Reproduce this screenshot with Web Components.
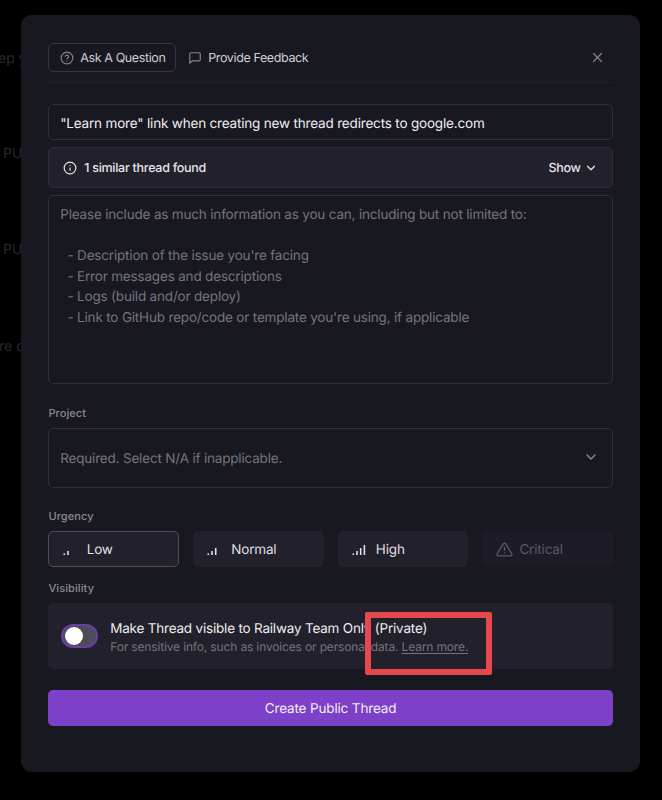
<!DOCTYPE html>
<html><head><meta charset="utf-8">
<style>
html,body{margin:0;padding:0;background:#000;height:800px;overflow:hidden}
body{font-family:Inter,"Liberation Sans",sans-serif;color:#e6e5ea;position:relative;text-rendering:geometricPrecision}
</style></head><body>
<bg-page></bg-page>
<thread-modal>
  <div style="display:flex;align-items:center">
    <tab-btn active icon="q">Ask A Question</tab-btn>
    <tab-btn icon="c">Provide Feedback</tab-btn>
    <x-close></x-close>
  </div>
</thread-modal>
<red-mark></red-mark>
<script>
const icons={
q:'<svg width="14" height="14" viewBox="0 0 24 24" fill="none" stroke="currentColor" stroke-width="2" stroke-linecap="round" stroke-linejoin="round"><circle cx="12" cy="12" r="10"/><path d="M9.1 9a3 3 0 0 1 5.8 1c0 2-3 3-3 3"/><path d="M12 17h.01"/></svg>',
c:'<svg width="14" height="14" viewBox="0 0 24 24" fill="none" stroke="currentColor" stroke-width="2" stroke-linecap="round" stroke-linejoin="round"><path d="M21 15a2 2 0 0 1-2 2H7l-4 4V5a2 2 0 0 1 2-2h14a2 2 0 0 1 2 2z"/></svg>',
info:'<svg width="14" height="14" viewBox="0 0 24 24" fill="none" stroke="currentColor" stroke-width="2" stroke-linecap="round" stroke-linejoin="round"><circle cx="12" cy="12" r="10"/><path d="M12 16v-4"/><path d="M12 8h.01"/></svg>',
down:'<svg width="14" height="14" viewBox="0 0 24 24" fill="none" stroke="currentColor" stroke-width="2.2" stroke-linecap="round" stroke-linejoin="round"><path d="M6 9l6 6 6-6"/></svg>',
warn:'<svg width="17" height="17" viewBox="0 0 24 24" fill="none" stroke="currentColor" stroke-width="2" stroke-linecap="round" stroke-linejoin="round"><path d="M10.3 3.9 1.8 18a2 2 0 0 0 1.7 3h17a2 2 0 0 0 1.7-3L13.7 3.9a2 2 0 0 0-3.4 0z"/><path d="M12 9v4"/><path d="M12 17h.01"/></svg>'
};
function bars(n){
  const hs=[1.6,4,7,10];let s='';
  hs.forEach((h,i)=>{ if(i<n) s+=`<rect x="${(i*3.7+.5).toFixed(1)}" y="${10-h}" width="1.6" height="${h}" fill="currentColor"/>`;});
  return `<svg width="14" height="10" viewBox="0 0 14 10">${s}</svg>`;
}
function def(name,css,html){
  customElements.define(name,class extends HTMLElement{
    constructor(){super();const r=this.attachShadow({mode:'open'});
      r.innerHTML=`<style>${css}</style>`+(typeof html==='function'?html(this):html);}
  });
}
def('bg-page',`:host{display:block;height:800px;color:#2a2a2e;font:14px Inter,"Liberation Sans",sans-serif}
 .l{position:absolute;white-space:nowrap}`,
 `<div class="l" style="left:-2px;top:50px">ep you</div><div class="l" style="left:3px;top:145px">PUBLIC</div><div class="l" style="left:3px;top:241px">PUBLIC</div><div class="l" style="left:-1px;top:338px">re can</div>`);
def('tab-btn',`:host{display:inline-flex;align-items:center;height:29px;box-sizing:border-box;padding:2px 10px 0 10.8px;gap:6px;border:1px solid transparent;border-radius:5px;font-size:12.5px;letter-spacing:-.38px;color:#cfced4;white-space:nowrap}
 :host([active]){border-color:#37363f}
 svg{display:block;color:#85848d;margin-top:-2px}`,
 el=>`${icons[el.getAttribute('icon')]}<slot></slot>`);
def('x-close',`:host{margin-left:auto;margin-right:9.5px;display:block;width:11px;height:11px;color:#85848d}svg{display:block}`,
 `<svg width="11" height="11" viewBox="0 0 11 11" fill="none" stroke="currentColor" stroke-width="1.2" stroke-linecap="round"><path d="M1.5 1.5l8 8M9.5 1.5l-8 8"/></svg>`);
def('field-label',`:host{display:block;font-size:11px;font-weight:500;line-height:14px;color:#8b8a93;letter-spacing:.1px}`,`<slot></slot>`);
def('urg-btn',`:host{display:flex;flex:1;align-items:center;height:36px;box-sizing:border-box;border-radius:5px;background:#21202b;border:1px solid #21202b;padding:2px 0 0 13.3px;gap:10px;font-size:13.5px;letter-spacing:-.18px;color:#e0dfe5}
 :host([selected]){border-color:#4f4e58}
 :host([disabled]){background:#1d1c26;border-color:#1d1c26;color:#5a5962;gap:6px}
 .i{display:flex;width:14px;align-items:flex-end}
 :host([disabled]) .i{width:auto;margin-top:-2px}svg{display:block}`,
 el=>{const b=el.getAttribute('bars');return `<span class="i">${b?bars(+b):icons.warn}</span><slot></slot>`;});
def('toggle-sw',`:host{display:block;flex:none;width:37px;height:24px;box-sizing:border-box;border-radius:12px;background:#4d4c57;border:2px solid #6a3da8;position:relative}
 i{position:absolute;left:2px;top:1px;width:18px;height:18px;border-radius:50%;background:#fff}`,`<i></i>`);
def('red-mark',`:host{position:absolute;left:365px;top:612px;width:127px;height:63px;box-sizing:border-box;border:6px solid #e5484d;border-radius:2px;display:block}`,``);
def('thread-modal',`
 :host{position:absolute;left:21px;top:15px;width:619px;height:757px;box-sizing:border-box;padding:28px 27.3px 0 27.4px;background:#181821;border-radius:11px;display:flex;flex-direction:column}
 hr{border:0;height:1px;background:#201f29;margin:10px 0 21px;width:100%}
 .title{height:36px;box-sizing:border-box;border:1px solid #302f39;border-radius:5px;display:flex;align-items:center;padding:3px 0 0 10.8px;font-size:13.5px;letter-spacing:-.18px;color:#eeedf1;white-space:nowrap;margin-bottom:7px}
 .sim{height:41px;box-sizing:border-box;border:1px solid #2f2e38;border-radius:5px;background:#21202b;display:flex;align-items:center;padding:1px 14px 0 13.8px;font-size:12.5px;font-weight:500;letter-spacing:-.27px;color:#e6e5ea;gap:7px;margin-bottom:7px}
 .sim svg{display:block}.sim .show{margin-left:auto;display:flex;align-items:center;gap:3px}
 .ta{height:189px;box-sizing:border-box;border:1px solid #302f39;border-radius:5px;padding:9px 10.8px;font-size:13.5px;letter-spacing:-.18px;line-height:20.6px;color:#75747d;white-space:pre;margin-bottom:22px}
 .sel{height:60px;box-sizing:border-box;border:1px solid #302f39;border-radius:5px;display:flex;align-items:center;justify-content:space-between;padding:0 13px 2px 10.8px;font-size:13.5px;letter-spacing:-.18px;color:#75747d;margin:8px 0 21px}
 .sel span{padding-top:4px}
 .sel svg{display:block;color:#85848d}
 .urg{display:flex;gap:14px;margin:8px 0 14px}
 .vis{height:66px;box-sizing:border-box;background:#21202b;border-radius:5px;margin-top:8px;display:flex;align-items:center;padding:0 12.8px;gap:12px}
 .txt{padding-top:3px}
 .v1{font-size:13.5px;letter-spacing:-.2px;line-height:18px;color:#eeedf1;white-space:nowrap}
 .v2{font-size:12px;letter-spacing:-.15px;line-height:18px;color:#75747d;white-space:nowrap}
 .v2 u{text-underline-offset:1.5px}
 .go{height:36px;box-sizing:border-box;padding-top:2px;border-radius:5px;background:#7d40c9;margin-top:21px;display:flex;align-items:center;justify-content:center;font-size:13.5px;letter-spacing:-.15px;color:#f2ecfa}
`,el=>`<slot></slot><hr>
 <div class="title">"Learn more" link when creating new thread redirects to google.com</div>
 <div class="sim">${icons.info}<span>1 similar thread found</span><span class="show">Show ${icons.down}</span></div>
 <div class="ta">Please include as much information as you can, including but not limited to:

  - Description of the issue you're facing
  - Error messages and descriptions
  - Logs (build and/or deploy)
  - Link to GitHub repo/code or template you're using, if applicable</div>
 <field-label>Project</field-label>
 <div class="sel"><span>Required. Select N/A if inapplicable.</span>${icons.down.replace(/14/g,'16')}</div>
 <field-label>Urgency</field-label>
 <div class="urg"><urg-btn selected bars="2">Low</urg-btn><urg-btn bars="3">Normal</urg-btn><urg-btn bars="4">High</urg-btn><urg-btn disabled>Critical</urg-btn></div>
 <field-label>Visibility</field-label>
 <div class="vis"><toggle-sw></toggle-sw><div class="txt"><div class="v1">Make Thread visible to Railway Team Only (Private)</div><div class="v2">For sensitive info, such as invoices or personal data. <u>Learn more.</u></div></div></div>
 <div class="go">Create Public Thread</div>`);
</script>
</body></html>
